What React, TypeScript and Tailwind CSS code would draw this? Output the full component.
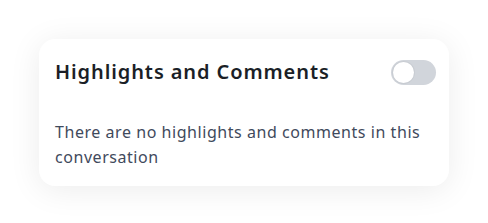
export default function App() {
  return (
    <div className="min-h-screen bg-white p-[39px]" style={{ fontFamily: "'Noto Sans', sans-serif" }}>
      <div className="w-[410px] rounded-2xl bg-white pl-4 pr-[13px] pt-[19px] pb-4 shadow-[0_4px_32px_rgba(0,0,0,0.08)]">
        <div className="flex items-center justify-between">
          <h2 className="text-[20px] leading-7 font-semibold tracking-[0.9px] text-[#1b1f27]">Highlights and Comments</h2>
          <button
            type="button"
            role="switch"
            aria-checked={false}
            className="flex h-[25px] w-[45px] items-center rounded-full bg-[#d1d5db] p-[2px]"
          >
            <span className="h-[21px] w-[21px] rounded-full bg-white shadow-[0_0_0_1px_rgba(0,0,0,0.04)]" />
          </button>
        </div>
        <p className="mt-[34px] text-[16px] leading-[25px] tracking-[0.55px] text-[#3f4a5c]">
          There are no highlights and comments in this conversation
        </p>
      </div>
    </div>
  );
}
